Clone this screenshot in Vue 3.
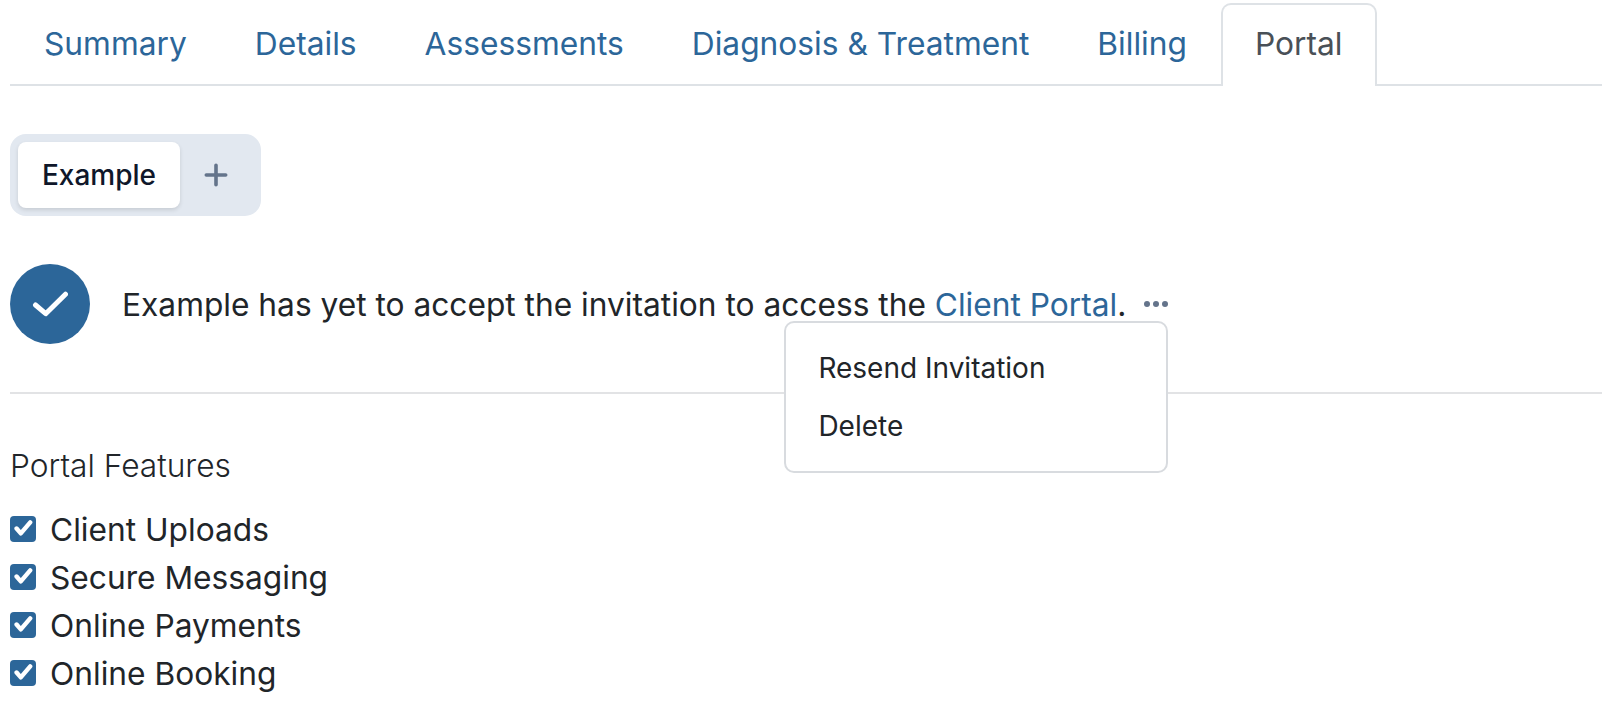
<template>
  <div class="page">
    <ul class="tabs">
      <li v-for="tab in tabs" :key="tab" :class="{ current: tab === 'Portal' }">{{ tab }}</li>
    </ul>

    <div class="pill">
      <div class="pill-item">Example</div>
      <svg class="plus" width="24" height="24" viewBox="0 0 24 24">
        <path d="M12 2.300v19.400M2.300 12h19.400" stroke="#64748b" stroke-width="3.600" stroke-linecap="round" fill="none" />
      </svg>
    </div>

    <div class="status">
      <div class="circle">
        <svg width="36" height="30" viewBox="0 0 36 30">
          <path d="M3.500 16l10.200 8.700L33.500 5.200" stroke="#fff" stroke-width="5" stroke-linecap="round" stroke-linejoin="round" fill="none" />
        </svg>
      </div>
      <p class="message">Example has yet to accept the invitation to access the <a>Client Portal</a>.</p>
      <div class="more">
        <span class="dots"><i></i><i></i><i></i></span>
        <ul class="menu">
          <li>Resend Invitation</li>
          <li>Delete</li>
        </ul>
      </div>
    </div>

    <hr class="divider" />

    <div class="features-title">Portal Features</div>
    <div class="feature" v-for="item in features" :key="item">
      <span class="check">
        <svg width="20" height="18" viewBox="0 0 20 18">
          <path d="M3.600 8.500l4.200 4.900L17.200 2.400" stroke="#fff" stroke-width="4.400" stroke-linecap="round" stroke-linejoin="round" fill="none" />
        </svg>
      </span>
      {{ item }}
    </div>
  </div>
</template>

<script setup>
const tabs = ['Summary', 'Details', 'Assessments', 'Diagnosis & Treatment', 'Billing', 'Portal']
const features = ['Client Uploads', 'Secure Messaging', 'Online Payments', 'Online Booking']
</script>

<style>
html, body {
  margin: 0;
  background: #fff;
}
</style>

<style scoped>
.page {
  height: 722px;
  padding: 3px 0 0 10px;
  box-sizing: border-box;
  overflow: hidden;
  font-family: Inter, "Liberation Sans", sans-serif;
  font-size: 31.7px;
  color: #212529;
}

.tabs {
  display: flex;
  list-style: none;
  margin: 0;
  padding: 0;
  height: 81px;
  border-bottom: 2px solid #dee2e6;
}
.tabs li {
  height: 81px;
  padding: 0 32px;
  line-height: 78px;
  font-size: 31.72px;
  color: #2c6699;
  border: 2px solid transparent;
  border-bottom: none;
  border-radius: 10px 10px 0 0;
}
.tabs li.current {
  color: #495057;
  background: #fff;
  border-color: #dee2e6;
}

.pill {
  display: flex;
  align-items: center;
  width: 251px;
  height: 82px;
  margin-top: 48px;
  padding: 8px;
  box-sizing: border-box;
  background: #e2e8f0;
  border-radius: 16px;
}
.pill-item {
  width: 162px;
  height: 66px;
  line-height: 66px;
  text-align: center;
  font-size: 28px;
  font-weight: 500;
  color: #0f172a;
  background: #fff;
  border-radius: 8px;
  box-shadow: 0 2px 4px rgba(0, 0, 0, 0.12);
}
.plus {
  margin-left: 24px;
}

.status {
  display: flex;
  align-items: center;
  margin-top: 48px;
  height: 80px;
}
.circle {
  display: flex;
  align-items: center;
  justify-content: center;
  width: 80px;
  height: 80px;
  flex: none;
  background: #2c6699;
  border-radius: 50%;
}
.message {
  margin: 0 0 0 32px;
  white-space: nowrap;
}
.message a {
  color: #2c6699;
}

.more {
  position: relative;
  margin-left: 18px;
}
.dots {
  display: flex;
  gap: 3px;
}
.dots i {
  width: 6px;
  height: 6px;
  border-radius: 50%;
  background: #64748b;
}
.menu {
  position: absolute;
  top: 20px;
  right: 0;
  width: 384px;
  height: 152px;
  box-sizing: border-box;
  margin: 0;
  padding: 16px 0;
  list-style: none;
  background: #fff;
  border: 2px solid #d8dbdf;
  border-radius: 10px;
  font-size: 28px;
  z-index: 2;
}
.menu li {
  padding: 0 32px;
  height: 58px;
  line-height: 58px;
}

.divider {
  margin: 48px 0 0;
  border: none;
  border-top: 2px solid #e2e3e5;
}

.features-title {
  margin-top: 53px;
  margin-bottom: 20px;
  line-height: 38px;
  font-weight: 300;
}
.feature {
  display: flex;
  align-items: center;
  height: 48px;
}
.check {
  display: flex;
  align-items: center;
  justify-content: center;
  width: 26px;
  height: 26px;
  margin-right: 14px;
  background: #2c6699;
  border-radius: 4px;
}
</style>
